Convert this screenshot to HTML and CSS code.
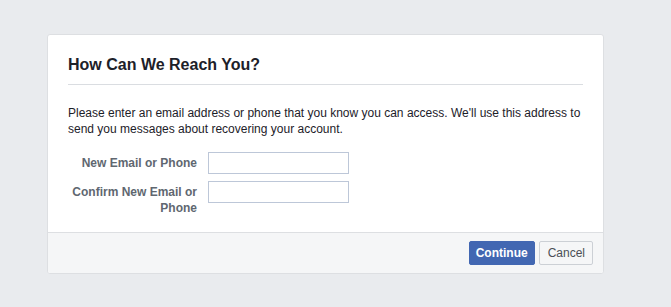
FILE: index.html
```html
<!DOCTYPE html>
<html>
<head>
<meta charset="utf-8">
<link rel="stylesheet" href="styles.css">
</head>
<body>
<div class="page">
  <div class="card">
    <div class="card-head">
      <h2 class="title">How Can We Reach You?</h2>
    </div>
    <div class="card-body">
      <p class="intro">Please enter an email address or phone that you know you can access. We'll use this address to send you messages about recovering your account.</p>
      <div class="form">
        <label class="label">New Email or Phone</label>
        <input class="field" type="text">
        <label class="label">Confirm New Email or Phone</label>
        <input class="field" type="text">
      </div>
    </div>
    <div class="card-foot">
      <button class="btn btn-primary">Continue</button>
      <button class="btn btn-secondary">Cancel</button>
    </div>
  </div>
</div>
</body>
</html>
```

FILE: styles.css
```css
html, body {
  margin: 0;
  padding: 0;
  background: #e9ebee;
  font-family: "Liberation Sans", Arial, Helvetica, sans-serif;
  color: #1d2129;
}

.page {
  padding: 34px 0 0 47px;
}

.card {
  width: 555px;
  background: #fff;
  border: 1px solid #dddfe2;
  border-radius: 3px;
  overflow: hidden;
}

.card-head {
  margin: 0 20px;
  padding: 20px 0 9px;
  border-bottom: 1px solid #dadde1;
}

.title {
  margin: 0;
  font-size: 16px;
  line-height: 20px;
  font-weight: bold;
  color: #1d2129;
}

.card-body {
  padding: 20px 20px 16px;
}

.intro {
  margin: 0 0 15px;
  font-size: 12px;
  line-height: 16px;
}

.form {
  display: grid;
  grid-template-columns: 129px 141px;
  column-gap: 11px;
  row-gap: 7px;
  align-items: start;
}

.label {
  text-align: right;
  font-size: 12px;
  line-height: 16px;
  font-weight: bold;
  color: #606770;
  padding-top: 3px;
}

.field {
  box-sizing: border-box;
  width: 141px;
  height: 22px;
  margin: 0;
  border: 1px solid #bdc7d8;
  padding: 3px;
  font-family: inherit;
  font-size: 12px;
  background: #fff;
}

.card-foot {
  display: flex;
  justify-content: flex-end;
  gap: 4px;
  padding: 8px 10px;
  background: #f5f6f7;
  border-top: 1px solid #dddfe2;
}

.btn {
  box-sizing: border-box;
  height: 24px;
  margin: 0;
  border-radius: 2px;
  font-family: inherit;
  font-size: 12px;
  line-height: 22px;
  font-weight: bold;
}

.btn-primary {
  padding: 0 6px;
  background: #4267b2;
  border: 1px solid #4267b2;
  color: #fff;
}

.btn-secondary {
  padding: 0 7px 0 8px;
  background: #f5f6f7;
  border: 1px solid #ccd0d5;
  color: #4b4f56;
  font-weight: normal;
}
```
